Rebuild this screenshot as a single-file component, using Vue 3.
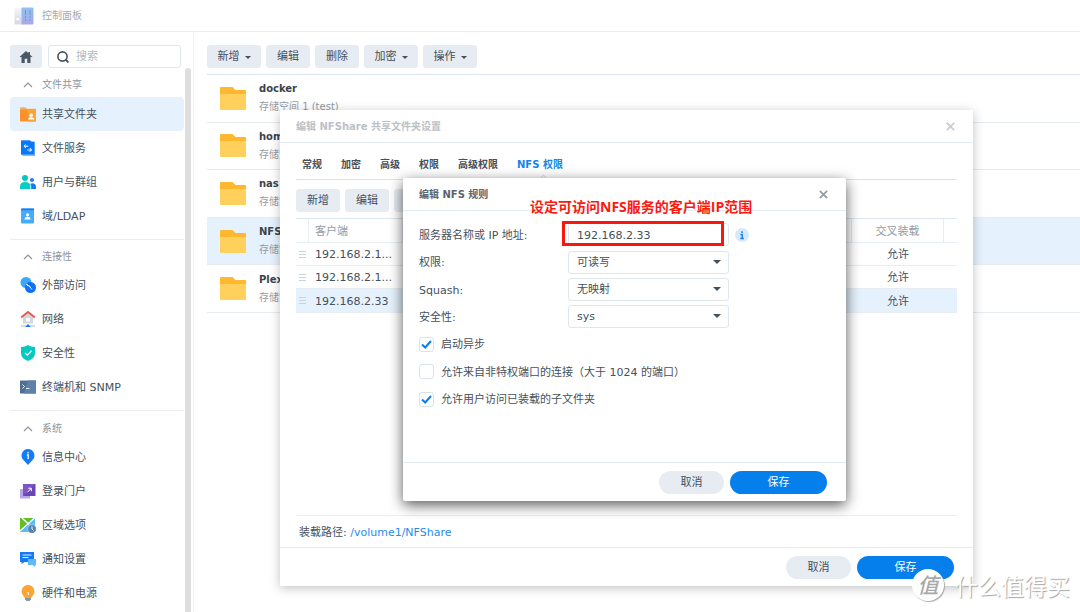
<script setup>
import { ref } from 'vue'

const groups = [
  {
    title: '文件共享',
    items: [
      { name: '共享文件夹', icon: 'share', active: true },
      { name: '文件服务', icon: 'service' },
      { name: '用户与群组', icon: 'users' },
      { name: '域/LDAP', icon: 'ldap' },
    ],
  },
  {
    title: '连接性',
    items: [
      { name: '外部访问', icon: 'external' },
      { name: '网络', icon: 'network' },
      { name: '安全性', icon: 'shield' },
      { name: '终端机和 SNMP', icon: 'terminal' },
    ],
  },
  {
    title: '系统',
    items: [
      { name: '信息中心', icon: 'info' },
      { name: '登录门户', icon: 'portal' },
      { name: '区域选项', icon: 'region' },
      { name: '通知设置', icon: 'notify' },
      { name: '硬件和电源', icon: 'power' },
    ],
  },
]

const actions = [
  { name: '新增', menu: true },
  { name: '编辑' },
  { name: '删除' },
  { name: '加密', menu: true },
  { name: '操作', menu: true },
]

const folders = [
  { name: 'docker', place: '存储空间 1 (test)' },
  { name: 'home', place: '存储空间 1 (test)' },
  { name: 'nas', place: '存储空间 1 (test)' },
  { name: 'NFShare', place: '存储空间 1 (test)', active: true },
  { name: 'Plex', place: '存储空间 1 (test)' },
]

const tabs = ['常规', '加密', '高级', '权限', '高级权限', 'NFS 权限']

const clients = [
  { ip: '192.168.2.1...', cross: '允许' },
  { ip: '192.168.2.1...', cross: '允许' },
  { ip: '192.168.2.33', cross: '允许', active: true },
]

const search = ref('')
const host = ref('192.168.2.33')
const selects = [
  { id: 'privilege', label: '权限:', value: '可读写' },
  { id: 'squash', label: 'Squash:', value: '无映射' },
  { id: 'security', label: '安全性:', value: 'sys' },
]
const checks = ref([
  { id: 'async', label: '启动异步', on: true },
  { id: 'ports', label: '允许来自非特权端口的连接（大于 1024 的端口）', on: false },
  { id: 'subfolders', label: '允许用户访问已装载的子文件夹', on: true },
])
</script>

<template>
  <div class="desk">
    <header class="titlebar">
      <svg class="logo" viewBox="0 0 20 18" aria-hidden="true">
        <defs>
          <linearGradient id="panelBlue" x1="0" y1="0" x2="0" y2="1">
            <stop offset="0" stop-color="#90c2ef" /><stop offset="1" stop-color="#a9a8e9" />
          </linearGradient>
          <linearGradient id="panelGrey" x1="0" y1="0" x2="0" y2="1">
            <stop offset="0" stop-color="#f5f6f9" /><stop offset="1" stop-color="#d5d9e6" />
          </linearGradient>
        </defs>
        <rect x="0.500" y="0.500" width="9" height="17" rx="1" fill="url(#panelGrey)" />
        <rect x="7.500" y="0.500" width="12" height="17" rx="1" fill="url(#panelBlue)" />
        <circle cx="3.700" cy="12" r="2" fill="#fff" stroke="#ccd2df" stroke-width="0.600" />
        <path d="M11.500 3v11M16 3v11" stroke="#6f98d3" stroke-width="1" stroke-dasharray="5 1 2 1" />
      </svg>
      <h1>控制面板</h1>
    </header>

    <div class="body">
      <aside class="side">
        <div class="finder">
          <button class="home" aria-label="主页">
            <svg viewBox="0 0 14 12"><path d="M7 0 0.500 6H2.500v6h3.200V7.800h2.600V12h3.200V6h2L11 3.700V1H9.400v1.200z" fill="#4b5764" /></svg>
          </button>
          <div class="search">
            <svg viewBox="0 0 12 12"><circle cx="5.500" cy="5.500" r="4.600" fill="none" stroke="#45525f" stroke-width="1.600" /><path d="M8.500 8.500l3 3" stroke="#45525f" stroke-width="1.800" /></svg>
            <input v-model="search" type="text" placeholder="搜索" aria-label="搜索" />
          </div>
        </div>
        <div class="scroll">
          <nav>
            <section v-for="g in groups" :key="g.title">
              <h2>
                <svg viewBox="0 0 10 6"><path d="M1 5l4-4 4 4" fill="none" stroke="#8c959e" stroke-width="1.200" /></svg>
                {{ g.title }}
              </h2>
              <a v-for="i in g.items" :key="i.name" href="#" :class="{ on: i.active }">
                <svg viewBox="0 0 16 16" aria-hidden="true">
                  <template v-if="i.icon === 'share'">
                    <path d="M0 2.200q0-1 1-1h4.500L7 2.700h9V7H0z" fill="#edb36f" />
                    <rect y="3.500" width="16" height="12" rx="0.800" fill="#f9922a" />
                    <path d="M7 3.500h9v11.200q0 .8-.8.800H9z" fill="#fba536" />
                    <circle cx="11.200" cy="9.200" r="1.700" fill="#fff" /><path d="M8.200 13.500q0-2.300 3-2.300t3 2.300z" fill="#fff" />
                  </template>
                  <template v-else-if="i.icon === 'service'">
                    <path d="M1 .5h9l1.500 1.200H15v14H3l-2-1z" fill="#5aa5fa" /><path d="M1 .5h9l1.500 1.200H14v12.500H1z" fill="#0877fa" />
                    <path d="M5.800 4.500L4 6.200 5.800 8M4.300 6.200h4M9.800 8l1.800 2-1.800 1.800M11.300 10h-4" fill="none" stroke="#fff" />
                  </template>
                  <template v-else-if="i.icon === 'users'">
                    <circle cx="5" cy="4" r="3" fill="#08c5bd" /><path d="M0 15v-2.500Q0 8 5.200 8t5.200 4.500V15z" fill="#08cfc3" />
                    <circle cx="12" cy="6" r="2.100" fill="#217df2" /><path d="M11.200 15v-3l-1-2.300q1-.5 2-.5 3.800 0 3.800 4V15z" fill="#1579f5" />
                  </template>
                  <template v-else-if="i.icon === 'ldap'">
                    <rect x="1" y="0.500" width="13" height="15" rx="1" fill="#43adfc" /><path d="M1 1.500q0-1 1-1h12v1.800H1z" fill="#2379e9" />
                    <circle cx="7.600" cy="6.800" r="1.600" fill="#fff" /><path d="M4.600 11.500q0-2.700 3-2.700t3 2.700z" fill="#fff" />
                  </template>
                  <template v-else-if="i.icon === 'external'">
                    <circle cx="6" cy="5.500" r="5.500" fill="#37a9f8" /><circle cx="10.500" cy="10.500" r="5.500" fill="#1171f8" />
                    <path d="M5.500 9.500q0-4 4-4.500 2 1.500 2 5" fill="#0b5de0" opacity="0.500" /><path d="M6.500 7l4 3.500 1.500 2M6.500 7l1.300 2.200M10.500 10.500l-1.500-2.200" fill="none" stroke="#fff" stroke-width="0.900" />
                  </template>
                  <template v-else-if="i.icon === 'network'">
                    <path d="M3 6.500L8 2l5 4.500V12.500H3z" fill="#d4d7dc" /><rect x="6" y="7" width="4" height="3.500" fill="#fff" />
                    <path d="M1.200 6.500L8 1l6.800 5.500" fill="none" stroke="#de5753" stroke-width="1.900" />
                    <path d="M1 15h14" stroke="#b9c3cd" stroke-width="1.200" /><path d="M5.200 16L8 13l2.800 3z" fill="#1479f5" />
                  </template>
                  <template v-else-if="i.icon === 'shield'">
                    <path d="M8 0q3 2 7 2v6q0 5.500-7 8-7-2.500-7-8V2q4 0 7-2z" fill="#06c9c4" /><path d="M5 8l2.300 2.200L11.500 5.800" fill="none" stroke="#fff" stroke-width="1.300" />
                  </template>
                  <template v-else-if="i.icon === 'terminal'">
                    <rect y="1.500" width="16" height="13" fill="#506f92" /><path d="M8 1.500h8v13H4z" fill="#5c82a9" />
                    <path d="M2.500 5.500l2 2-2 2M6 9.500h3.500" fill="none" stroke="#fff" stroke-width="0.900" />
                  </template>
                  <template v-else-if="i.icon === 'info'">
                    <path d="M8 0a6.500 6.500 0 0 1 4.600 11L8 16l-4.600-5A6.500 6.500 0 0 1 8 0z" fill="#147cf9" />
                    <path d="M8 3v1.500M6.900 6H8.200v4" fill="none" stroke="#fff" stroke-width="1.300" />
                  </template>
                  <template v-else-if="i.icon === 'portal'">
                    <rect y="6" width="10" height="9.500" fill="#b9a4ee" /><rect x="3" y="1" width="12.500" height="12" rx="0.500" fill="#6b46b3" />
                    <path d="M3 13V1h12z" fill="#7d55c6" /><path d="M7.500 9.200l3.600-3.700M8.300 5.200h3v3" fill="none" stroke="#fff" />
                  </template>
                  <template v-else-if="i.icon === 'region'">
                    <rect y="1" width="15" height="14" fill="#58bcf5" /><path d="M0 1h13L0 13.500z" fill="#62bf1f" />
                    <path d="M0 14L14.500 1M2 1l7 6.500" stroke="#fff" stroke-width="1.300" /><circle cx="12" cy="12" r="4.300" fill="#5581ae" stroke="#d7eaf8" stroke-width="0.500" />
                    <path d="M12 9.500V12l1.500 1.500" fill="none" stroke="#fff" />
                  </template>
                  <template v-else-if="i.icon === 'notify'">
                    <path d="M0 1h14v10H4.500L1.500 13v-2H0z" fill="#107af8" /><path d="M8 8h8v6h-.8v2l-2.700-2H8z" fill="#5cb9fb" />
                    <path d="M2.500 4h9M2.500 6.500h6" stroke="#fff" stroke-width="0.900" />
                  </template>
                  <template v-else>
                    <path d="M8 0a6.400 6.400 0 0 1 4.400 11L11 13H5l-1.400-2A6.400 6.400 0 0 1 8 0z" fill="#fba532" />
                    <path d="M5 13h6v1.500L9.500 16h-3L5 14.500z" fill="#8b98a8" /><path d="M7.300 7.500H8.300V10" fill="none" stroke="#fff" />
                  </template>
                </svg>
                <span>{{ i.name }}</span>
              </a>
            </section>
          </nav>
          <div class="track"></div>
        </div>
      </aside>

      <main class="content">
        <div class="tools">
          <button v-for="a in actions" :key="a.name" class="btn" :class="{ wide: a.menu }">
            {{ a.name }}<i v-if="a.menu" class="caret"></i>
          </button>
        </div>
        <ul class="folders">
          <li v-for="f in folders" :key="f.name" :class="{ on: f.active }">
            <svg viewBox="0 0 26 23" aria-hidden="true">
              <path d="M0 1q0-1 1-1h11.500l3 3H25q1 0 1 1v6H0z" fill="#fdb82f" /><path d="M0 7h26v15q0 1-1 1H1q-1 0-1-1z" fill="#ffd15c" />
            </svg>
            <div><strong>{{ f.name }}</strong><span>{{ f.place }}</span></div>
          </li>
        </ul>
      </main>
    </div>

    <section class="dialog folder-dialog" aria-label="编辑 NFShare 共享文件夹设置">
      <header>
        <h2>编辑 NFShare 共享文件夹设置</h2>
        <button class="close" aria-label="关闭"><svg viewBox="0 0 10 10"><path d="M1 1l8 8M9 1L1 9" stroke="currentColor" stroke-width="2" /></svg></button>
      </header>
      <div class="pane">
        <div class="tabs" role="tablist">
          <button v-for="t in tabs" :key="t" role="tab" :aria-selected="t === 'NFS 权限'">{{ t }}</button>
        </div>
        <div class="tools">
          <button class="btn">新增</button><button class="btn">编辑</button><button class="btn">删除</button>
        </div>
        <table>
          <colgroup><col class="edge" /><col class="client" /><col /><col class="cross" /><col class="edge" /></colgroup>
          <thead>
            <tr><th></th><th class="left">客户端</th><th></th><th>交叉装载</th><th></th></tr>
          </thead>
          <tbody>
            <tr v-for="(c, n) in clients" :key="n" :class="{ on: c.active }">
              <td><svg class="grip" viewBox="0 0 7 7"><path d="M0 .5h7M0 3.500h7M0 6.500h7" stroke="#c9d3dd" /></svg></td>
              <td class="left">{{ c.ip }}</td><td></td><td>{{ c.cross }}</td><td></td>
            </tr>
          </tbody>
        </table>
        <p class="path">装载路径: <a href="#">/volume1/NFShare</a></p>
      </div>
      <footer>
        <button class="pill">取消</button><button class="pill save">保存</button>
      </footer>
    </section>

    <section class="dialog rule-dialog" aria-label="编辑 NFS 规则">
      <header>
        <h2>编辑 NFS 规则</h2>
        <button class="close" aria-label="关闭"><svg viewBox="0 0 10 10"><path d="M1 1l8 8M9 1L1 9" stroke="currentColor" stroke-width="2" /></svg></button>
      </header>
      <form @submit.prevent>
        <div class="row">
          <label for="host">服务器名称或 IP 地址:</label>
          <div class="field"><input id="host" v-model="host" type="text" /><i class="mark"></i></div>
          <svg class="hint" viewBox="0 0 14 14"><circle cx="7" cy="7" r="7" fill="#d6e9fd" /><path d="M7 3.200v1.700M5.500 6.500H7.200v4M5.300 10.500h3.600" fill="none" stroke="#1683ee" stroke-width="1.500" /></svg>
        </div>
        <div v-for="s in selects" :key="s.id" class="row">
          <label :for="s.id">{{ s.label }}</label>
          <div class="field">
            <select :id="s.id"><option>{{ s.value }}</option></select><i class="caret"></i>
          </div>
        </div>
        <div v-for="c in checks" :key="c.id" class="row check">
          <input :id="c.id" v-model="c.on" type="checkbox" />
          <svg v-if="c.on" class="tick" viewBox="0 0 11 9"><path d="M1 4.500l3.200 3L10 1" fill="none" stroke="#087fef" stroke-width="2" /></svg>
          <label :for="c.id">{{ c.label }}</label>
        </div>
      </form>
      <footer>
        <button class="pill">取消</button><button class="pill save">保存</button>
      </footer>
      <p class="note">设定可访问NFS服务的客户端IP范围</p>
    </section>

    <div class="stamp"><b>值</b><span>什么值得买</span></div>
  </div>
</template>

<style>
body {
  margin: 0;
  overflow: hidden;
}
</style>

<style scoped>
* {
  box-sizing: border-box;
}
.desk {
  position: relative;
  display: flex;
  flex-direction: column;
  height: 100vh;
  overflow: hidden;
  background: #fff;
  color: #45505b;
  font: 11px/16px "DejaVu Sans", "Noto Sans CJK SC", sans-serif;
}
button,
input,
select {
  margin: 0;
  padding: 0;
  border: 0;
  background: none;
  color: inherit;
  font: inherit;
}
h1,
h2,
p,
ul {
  margin: 0;
  padding: 0;
  font-size: 10px;
}
svg {
  display: block;
  flex: none;
}
.titlebar {
  display: flex;
  align-items: center;
  gap: 8px;
  flex: none;
  height: 32px;
  padding-left: 14px;
  border-bottom: 1px solid #eaecef;
}
.titlebar h1 {
  padding-top: 1px;
  color: #a5abb1;
  font-weight: normal;
}
.logo {
  width: 20px;
  height: 18px;
}
.body {
  display: flex;
  flex: 1;
  min-height: 0;
}
.side {
  display: flex;
  flex-direction: column;
  flex: none;
  width: 194px;
  border-right: 1px solid #eef0f6;
}
.finder {
  display: flex;
  gap: 6px;
  flex: none;
  padding: 13px 12px 0 10px;
}
.home {
  display: grid;
  place-items: center;
  width: 32px;
  height: 23px;
  border-radius: 3px;
  background: #e7ebf2;
}
.home svg {
  width: 14px;
  height: 12px;
}
.search {
  display: flex;
  align-items: center;
  gap: 7px;
  flex: 1;
  min-width: 0;
  padding-left: 8px;
  border: 1px solid #dfe6ee;
  border-radius: 3px;
}
.search svg {
  width: 12px;
  height: 12px;
}
.search input {
  width: 100%;
  min-width: 0;
  padding-top: 1px;
  outline: 0;
}
.search input::placeholder {
  color: #b4babf;
}
.scroll {
  display: flex;
  flex: 1;
  min-height: 0;
  overflow: hidden;
}
.track {
  width: 6px;
  margin-left: 1px;
  border-radius: 3px 3px 0 0;
  background: #dedede;
}
nav {
  width: 184px;
  padding: 0 0 0 10px;
}
nav section + section {
  margin-top: 6px;
  border-top: 1px solid #e9edf3;
}
nav h2 {
  display: flex;
  align-items: center;
  gap: 9px;
  height: 28px;
  padding: 5px 0 0 13px;
  color: #8c959e;
  font-weight: normal;
}
nav section:first-child h2 {
  height: 29px;
}
nav section:last-child h2 {
  height: 29px;
  padding-top: 6px;
}
nav h2 svg {
  width: 10px;
  height: 6px;
}
nav a {
  display: flex;
  align-items: center;
  gap: 6px;
  height: 34px;
  padding-left: 10px;
  border-radius: 4px;
  color: #45505b;
  text-decoration: none;
}
nav a span {
  padding-top: 2px;
}
nav a.on {
  background: #e5f1fd;
}
nav a svg {
  width: 16px;
  height: 16px;
}
.content {
  flex: 1;
  min-width: 0;
  padding: 13px 0 0 13px;
}
.tools {
  display: flex;
  gap: 5px;
}
.btn {
  display: flex;
  align-items: center;
  justify-content: center;
  gap: 5px;
  width: 44px;
  height: 23px;
  padding-top: 1px;
  border-radius: 3px;
  background: #e7ecf3;
}
.btn.wide {
  width: 54px;
}
.caret {
  width: 0;
  height: 0;
  border: 3px solid transparent;
  border-top-color: #45505b;
  border-bottom: 0;
}
.folders {
  display: grid;
  grid-template-rows: repeat(5, 1fr);
  min-height: 239px;
  margin-top: 6px;
  border-top: 1px solid #dce5ee;
  list-style: none;
}
.folders li {
  display: flex;
  align-items: center;
  gap: 13px;
  padding-left: 13px;
  border-bottom: 1px solid #e6ebf0;
}
.folders li.on {
  background: #e5f1fd;
}
.folders svg {
  width: 26px;
  height: 23px;
}
.folders strong,
.folders span {
  display: block;
  line-height: 18px;
}
.folders strong {
  color: #3a444e;
}
.folders span {
  color: #959ca3;
}
.dialog {
  position: absolute;
  display: flex;
  flex-direction: column;
  background: #fff;
}
.dialog header {
  display: flex;
  align-items: center;
  justify-content: space-between;
  flex: none;
  height: 33px;
  padding: 0 16px;
  border-bottom: 1px solid #e4ebf2;
}
.dialog h2 {
  padding-top: 2px;
}
.close {
  display: grid;
  place-items: center;
  width: 14px;
  height: 14px;
  color: #969da5;
}
.close svg {
  width: 9px;
  height: 9px;
}
.dialog footer {
  display: flex;
  justify-content: flex-end;
  gap: 6px;
  flex: none;
  height: 39px;
  padding: 8px 19px 0;
  border-top: 1px solid #e4ebf0;
}
.pill {
  width: 65px;
  height: 23px;
  border-radius: 12px;
  background: #e7ecf3;
}
.pill.save {
  width: 97px;
  background: #057feb;
  color: #fff;
}
.folder-dialog {
  inset: 110px 107px 26px 280px;
  box-shadow: 0 2px 10px rgba(0, 0, 0, 0.25);
}
.folder-dialog h2 {
  color: #bcc1c6;
}
.folder-dialog .close {
  color: #c9cdd1;
}
.pane {
  display: flex;
  flex-direction: column;
  flex: 1;
  padding: 0 16px;
}
.tabs {
  display: flex;
  gap: 19px;
  height: 37px;
  padding: 7px 6px 0;
  border-bottom: 1px solid #dbe4ec;
}
.tabs button {
  position: relative;
  font-size: 10px;
  font-weight: bold;
}
.tabs button[aria-selected="true"] {
  color: #1682e8;
}
.tabs button[aria-selected="true"]::after {
  position: absolute;
  bottom: -4px;
  left: 50%;
  width: 6px;
  height: 6px;
  border: 1px solid #dbe4ec;
  border-width: 1px 0 0 1px;
  background: #fff;
  content: "";
  transform: rotate(45deg);
}
.pane .tools {
  padding: 9px 0 6px;
}
table {
  width: 100%;
  border-top: 1px solid #dde6ee;
  border-spacing: 0;
  table-layout: fixed;
}
.edge {
  width: 13px;
}
.client {
  width: 94px;
}
.cross {
  width: 92px;
}
th,
td {
  height: 23px;
  padding: 2px 0 0;
  border-bottom: 1px solid #e8edf2;
  text-align: center;
  white-space: nowrap;
}
th {
  height: 24px;
  border-right: 1px solid #e8edf2;
  color: #959ca3;
  font-weight: normal;
}
th:last-child {
  border-right: 0;
}
.left {
  padding-left: 6px;
  text-align: left;
}
tr.on td {
  height: 24px;
  background: #e5f1fd;
}
.grip {
  width: 7px;
  height: 7px;
  margin-left: 3px;
}
td:first-child {
  padding-top: 0;
}
.path {
  margin-top: auto;
  height: 32px;
  padding: 9px 3px 0;
  border-top: 1px solid #eceef0;
  font-size: 11px;
}
.path a {
  color: #2a8bea;
  text-decoration: none;
}
.rule-dialog {
  inset: 178px 234px 111px 403px;
  border-radius: 2px;
  box-shadow: 0 4px 14px rgba(0, 0, 0, 0.65);
}
.rule-dialog h2 {
  color: #5a646e;
}
form {
  display: grid;
  flex: 1;
  grid-auto-rows: 1fr;
  padding: 10px 16px 49px;
}
.row {
  position: relative;
  display: flex;
  align-items: center;
}
.row > label {
  width: 149px;
  padding-top: 2px;
  white-space: nowrap;
}
.field {
  position: relative;
  width: 161px;
}
.field input,
.field select {
  display: block;
  width: 100%;
  height: 23px;
  padding: 1px 8px 0;
  border: 1px solid #dfe6ee;
  border-radius: 3px;
  appearance: none;
  background: #fff;
}
.field .caret {
  position: absolute;
  top: 9px;
  right: 8px;
  border-width: 4px 4px 0;
}
.mark {
  position: absolute;
  inset: -2px 5px 0 -6px;
  border: 3px solid #f9160c;
  pointer-events: none;
}
.hint {
  width: 14px;
  height: 14px;
  margin-left: 6px;
}
.check input {
  width: 15px;
  height: 15px;
  border: 1px solid #dae3ec;
  border-radius: 3px;
  appearance: none;
}
.check label {
  width: auto;
  margin-left: 7px;
}
.tick {
  position: absolute;
  left: 2px;
  width: 11px;
  height: 9px;
  pointer-events: none;
}
.note {
  position: absolute;
  top: 19px;
  left: 127px;
  color: #fb1a10;
  font: bold 14px/20px "Open Sans", "Noto Sans CJK SC", sans-serif;
  white-space: nowrap;
}
.stamp {
  position: absolute;
  right: 10px;
  bottom: 11px;
  display: flex;
  align-items: center;
  gap: 11px;
  color: #fff;
  font: 23px/32px "Noto Sans CJK SC", sans-serif;
  text-shadow: 1px 1px 1px #a4a4a4;
}
.stamp b {
  width: 32px;
  height: 32px;
  border-radius: 50%;
  background: #fff;
  box-shadow: 1px 1px 1px #aaa;
  color: #a9a9a9;
  font-size: 21px;
  font-style: italic;
  font-weight: 500;
  line-height: 31px;
  text-align: center;
  text-shadow: none;
}
</style>
